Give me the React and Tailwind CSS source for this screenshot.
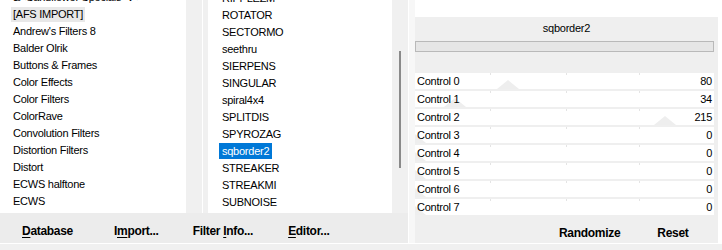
import React from "react";

const categories = [
  '&<Sandflower Specials "v">',
  "[AFS IMPORT]",
  "Andrew's Filters 8",
  "Balder Olrik",
  "Buttons & Frames",
  "Color Effects",
  "Color Filters",
  "ColorRave",
  "Convolution Filters",
  "Distortion Filters",
  "Distort",
  "ECWS halftone",
  "ECWS",
  "Edges, Frames",
];

const filters = [
  "RIPPLEZM",
  "ROTATOR",
  "SECTORMO",
  "seethru",
  "SIERPENS",
  "SINGULAR",
  "spiral4x4",
  "SPLITDIS",
  "SPYROZAG",
  "sqborder2",
  "STREAKER",
  "STREAKMI",
  "SUBNOISE",
  "SWEEPWAV",
];

const controls = [80, 34, 215, 0, 0, 0, 0, 0];

function Btn({ pre, u, post, className = "" }) {
  return (
    <span className={`font-bold text-[12px] tracking-[-0.3px] text-black ${className}`}>
      {pre}
      <span className="underline underline-offset-2">{u}</span>
      {post}
    </span>
  );
}

function ControlRow({ i, value }) {
  const x = value * 1.165;
  return (
    <div className="relative h-[16px] mr-[4px] bg-white overflow-hidden flex items-center justify-between px-[2px] text-[11px] tracking-[-0.25px] text-black">
      <span className="absolute top-0 left-[75px] w-px h-[2px] bg-[#e4e4e4]" />
      <span className="absolute top-0 left-[151px] w-px h-[2px] bg-[#e4e4e4]" />
      <span className="absolute top-0 left-[224px] w-px h-[2px] bg-[#e4e4e4]" />
      <svg className="absolute bottom-0" style={{ left: x - 11 }} width="22" height="9" viewBox="0 0 22 9">
        <polygon points="11,0 22,9 0,9" fill="#eeeeee" />
      </svg>
      <span className="relative">Control {i}</span>
      <span className="relative">{value}</span>
    </div>
  );
}

export default function App() {
  return (
    <div className="w-[722px] h-[250px] bg-[#f0f0f0] flex flex-col overflow-hidden font-['Liberation_Sans',Arial,sans-serif]">
      <div className="flex h-[243px]">
        <div className="w-[408px] flex flex-col">
          <div className="flex h-[213px]">
            <div className="w-[186px] bg-white overflow-hidden text-[11px] tracking-[-0.25px] text-black pl-[11px]">
              <div className="-mt-[11px]">
                {categories.map((c, i) => (
                  <div key={c} className="h-[17px] flex items-center">
                    <span className={`px-[2px] leading-[15px] ${i === 1 ? "bg-[#e8e8e8]" : ""}`}>{c}</span>
                  </div>
                ))}
              </div>
            </div>
            <div className="w-[16px] bg-[#f0f0f0]" />
            <div className="w-px bg-white" />
            <div className="w-[5px] bg-[#f0f0f0]" />
            <div className="w-[184px] bg-white overflow-hidden text-[11px] tracking-[-0.25px] text-black pl-[11px]">
              <div className="-mt-[11px]">
                {filters.map((f) => (
                  <div key={f} className="h-[17px] flex items-center">
                    <span
                      className={`px-[3px] leading-[16px] ${f === "sqborder2" ? "bg-[#0078d7] text-white" : ""}`}
                    >
                      {f}
                    </span>
                  </div>
                ))}
              </div>
            </div>
            <div className="w-[16px] bg-[#f0f0f0] flex justify-center pt-[51px]">
              <div className="w-[2px] h-[117px] bg-[#8a8a8a]" />
            </div>
          </div>
          <div className="flex-1 bg-[#ececec] flex items-center pt-[6px]">
            <Btn pre="" u="D" post="atabase" className="ml-[22px]" />
            <Btn pre="I" u="m" post="port..." className="ml-[41px]" />
            <Btn pre="Filter " u="I" post="nfo..." className="ml-[34px]" />
            <Btn pre="" u="E" post="ditor..." className="ml-[35px]" />
          </div>
        </div>
        <div className="w-px bg-white" />
        <div className="w-[6px] bg-[#f7f7f7]" />
        <div className="w-[303px] flex flex-col">
          <div className="h-[17px] bg-white" />
          <div className="flex-1 bg-[#efefef] flex flex-col">
            <div className="h-[22px] flex items-center justify-center text-[11px] tracking-[-0.25px] text-black pt-[1px]">sqborder2</div>
            <div className="h-[11px] mt-[2px] mr-[4px] border border-[#b9b9b9] bg-[#e6e6e6]" />
            <div className="h-[21px]" />
            <div className="flex flex-col gap-[2px]">
              {controls.map((v, i) => (
                <ControlRow key={i} i={i} value={v} />
              ))}
            </div>
            <div className="flex-1 flex items-center pt-[8px]">
              <span className="font-bold text-[12px] tracking-[-0.3px] text-black ml-[144px]">Randomize</span>
              <span className="font-bold text-[12px] tracking-[-0.3px] text-black ml-[37px]">Reset</span>
            </div>
          </div>
        </div>
        <div className="flex-1 bg-white" />
      </div>
      <div className="flex-1 border-t border-white bg-[#f0f0f0]" />
    </div>
  );
}
